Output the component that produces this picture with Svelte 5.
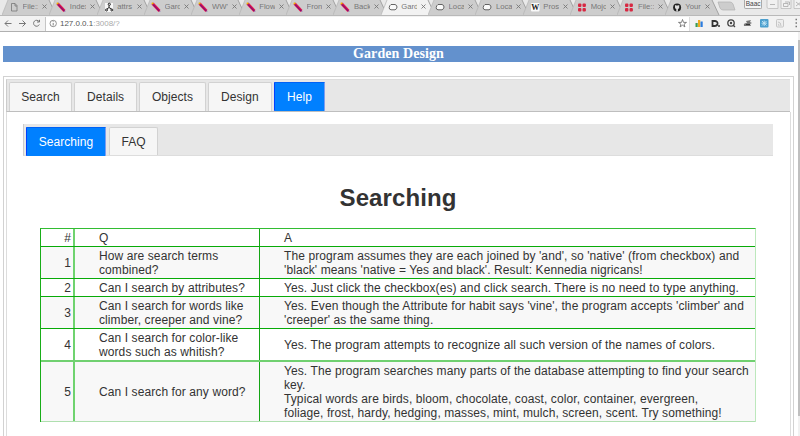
<script>
  const browserTabs = [
    { icon: 'file', title: 'File:::' },
    { icon: 'feather', title: 'Index' },
    { icon: 'graph', title: 'attrs' },
    { icon: 'feather', title: 'Gard' },
    { icon: 'feather', title: "WW'" },
    { icon: 'feather', title: 'Flow' },
    { icon: 'feather', title: 'Fron' },
    { icon: 'feather', title: 'Back' },
    { icon: 'cloud', title: 'Gard', active: true },
    { icon: 'cloud', title: 'Loca' },
    { icon: 'cloud', title: 'Loca' },
    { icon: 'wiki', title: 'Prosl' },
    { icon: 'dots', title: 'Mojo' },
    { icon: 'dots', title: 'File::' },
    { icon: 'github', title: 'Your' }
  ];
  const mainTabs = [
    { label: 'Search', width: 63 },
    { label: 'Details', width: 62.5 },
    { label: 'Objects', width: 66.5 },
    { label: 'Design', width: 63.5 },
    { label: 'Help', width: 51, active: true }
  ];
  const subTabs = [
    { label: 'Searching', width: 80, active: true },
    { label: 'FAQ', width: 49 }
  ];
  const rows = [
    { n: '#', q: ['Q'], a: ['A'], h: 18 },
    {
      n: '1',
      q: ['How are search terms', 'combined?'],
      a: [
        "The program assumes they are each joined by 'and', so 'native' (from checkbox) and",
        "'black' means 'native = Yes and black'. Result: Kennedia nigricans!"
      ],
      h: 32
    },
    {
      n: '2',
      q: ['Can I search by attributes?'],
      a: ['Yes. Just click the checkbox(es) and click search. There is no need to type anything.'],
      h: 18
    },
    {
      n: '3',
      q: ['Can I search for words like', 'climber, creeper and vine?'],
      a: [
        "Yes. Even though the Attribute for habit says 'vine', the program accepts 'climber' and",
        "'creeper' as the same thing."
      ],
      h: 32
    },
    {
      n: '4',
      q: ['Can I search for color-like', 'words such as whitish?'],
      a: ['Yes. The program attempts to recognize all such version of the names of colors.'],
      h: 33
    },
    {
      n: '5',
      q: ['Can I search for any word?'],
      a: [
        'Yes. The program searches many parts of the database attempting to find your search',
        'key.',
        'Typical words are birds, bloom, chocolate, coast, color, container, evergreen,',
        'foliage, frost, hardy, hedging, masses, mint, mulch, screen, scent. Try something!'
      ],
      h: 60
    }
  ];
</script>

<div class="browser">
  <div class="strip">
    {#each browserTabs as tab}
      <div class="btab">
        <svg class="shape" width="56" height="15" viewBox="0 0 56 15">
          <path d="M0 15 L6 0 H47 L54 15Z" fill={tab.active ? '#f2f2f2' : '#cdcdcd'} />
          <path d="M47 0 L54 15" stroke="#a2a2a2" stroke-width="1" fill="none" />
          <path d="M0 15 L6 0" stroke="#b4b4b4" stroke-width=".7" fill="none" />
        </svg>
        <svg class="fav" width="10" height="10" viewBox="0 0 10 10">
          {#if tab.icon === 'file'}
            <path d="M2.5 1.5H6L8 3.5V9H2.5ZM6 1.5V4H8" fill="none" stroke="#777" stroke-width=".8" />
          {:else if tab.icon === 'feather'}
            <path d="M1.5 1.5L8.5 9" stroke="#e5124b" stroke-width="2.8" />
            <path d="M1.5 2L8.8 9.5" stroke="#3a1296" stroke-width=".9" />
            <path d="M.8 .8L2.3 2.1" stroke="#f3b400" stroke-width="1.4" />
          {:else if tab.icon === 'graph'}
            <rect x="1" y="1" width="8" height="9" fill="#f7f7f7" />
            <g fill="none" stroke="#222" stroke-width="1">
              <circle cx="5.3" cy="2.3" r="1.1" /><circle cx="2.5" cy="8" r="1" /><circle cx="7.8" cy="8" r="1" />
              <path d="M5 3.5V5.5L3 7M5 5.5L7.5 7" />
            </g>
          {:else if tab.icon === 'cloud'}
            <path d="M3 2.5H7Q9 3 9 5T7 7.8H3Q1 7.5 1.2 5.5T3 2.5Z" fill="#fafafa" stroke="#555" stroke-width=".9" />
          {:else if tab.icon === 'wiki'}
            <rect x="1" y="1" width="8.5" height="8.5" rx="1" fill="#fafafa" />
            <text x="5.2" y="8" text-anchor="middle" class="w">W</text>
          {:else if tab.icon === 'dots'}
            <g fill="#d72842">
              <rect x="1" y="1.5" width="3.4" height="3.4" rx="1" /><rect x="5.5" y="1.5" width="3.4" height="3.4" rx="1" />
              <rect x="1" y="6" width="3.4" height="3.4" rx="1" /><rect x="5.5" y="6" width="3.4" height="3.4" rx="1" />
            </g>
          {:else}
            <circle cx="5.1" cy="5.5" r="4" fill="#222" />
            <path d="M3 3L4 3.4H6L7.2 3V6Q6.5 7 5.9 7V9.4H4.3V7Q3 6.8 3 5.5Z" fill="#ddd" />
          {/if}
        </svg>
        <span class="title">{tab.title}</span>
        <svg class="close" width="5" height="5" viewBox="0 0 5 5"><path d="M.5 .5L4.5 4.5M4.5 .5L.5 4.5" stroke="#777" stroke-width=".9" /></svg>
      </div>
    {/each}
    <svg class="newtab" width="20" height="12" viewBox="0 0 20 12"><path d="M1 2H13Q15 2 16 4L18 10H6Q4 10 3 8Z" fill="#cdcdcd" stroke="#b1b1b1" stroke-width=".7" /></svg>
    <div class="win">
      <span class="user">Ваас</span>
      <svg width="56" height="10" viewBox="0 0 56 10">
        <g fill="#f1f1f1" stroke="#bbb" stroke-width=".8">
          <path d="M1 0V7Q1 8.5 2.5 8.5H12V0M15 0V8.5H25V0M28 0V8.5H40V0" />
        </g>
        <path d="M4 4.5H9M17.5 3.5H22V6.5H17.5ZM19 2H23.5V5M30 2L35 6M35 2L30 6" fill="none" stroke="#aaa" stroke-width=".8" />
      </svg>
    </div>
  </div>
  <div class="toolbar">
    <svg width="45" height="16" viewBox="0 0 45 16" fill="none" stroke="#777" stroke-width="1">
      <path d="M11.5 7.5H5M8 4.5L5 7.5L8 10.5M19 7.5H25.5M22.5 4.5L25.5 7.5L22.5 10.5M39 5.5A3 3 0 1 0 39.3 8.5M39.5 3.8V6H37" />
    </svg>
    <div class="url">
      <svg width="14" height="14" viewBox="0 0 14 14"><circle cx="7.2" cy="6.5" r="3.2" fill="none" stroke="#777" stroke-width=".8" /><path d="M7.2 6V8.5M7.2 4.3V5.1" stroke="#777" stroke-width=".9" /></svg>
      <span class="addr">127.0.0.1<i>:3008/?</i></span>
      <svg class="star" width="12" height="14" viewBox="0 0 12 14"><path d="M5.5 2.5L6.5 5.4H9.5L7.1 7.1L7.9 9.9L5.5 8.2L3.1 9.9L3.9 7.1L1.5 5.4H4.5Z" fill="none" stroke="#666" stroke-width=".8" /></svg>
    </div>
    <svg width="110" height="16" viewBox="0 0 110 16">
      <rect x="5.5" y="7" width="2.2" height="4" fill="#3c9b52" /><rect x="8" y="4" width="2.2" height="7" fill="#f0aa1d" /><rect x="10.5" y="5.5" width="2.2" height="5.5" fill="#2b7de0" />
      <path d="M22.5 5H25Q28 5.5 27.5 8Q27 10 24.5 10H22.5Z" fill="none" stroke="#333" stroke-width="1.8" /><circle cx="29" cy="10" r="1" fill="#333" />
      <circle cx="41" cy="7" r="3.2" fill="none" stroke="#444" stroke-width="1.3" /><circle cx="41" cy="7" r="1.2" fill="#444" /><path d="M43 9L45 11" stroke="#444" stroke-width="1.3" />
      <path d="M54 10Q53 7 57 7L56 5L61 4L60 6L62 7L60 8L61 10Z" fill="#777" /><path d="M56 8.5H60" stroke="#333" />
      <rect x="70" y="3" width="8.5" height="8.5" rx="1" fill="#4b9fce" /><path d="M72 5L76.5 9.5M76.5 5L72 9.5M74.2 4.5V10M71.5 7.2H77" stroke="#c6e5f4" stroke-width=".9" />
      <rect x="86.5" y="3.5" width="7" height="7.5" rx="1" fill="#eee" stroke="#bbb" stroke-width=".8" /><path d="M88 6Q91 6 91 10M88 8Q89 8 89 10" fill="none" stroke="#bbb" stroke-width=".8" />
      <path d="M105.5 3.5H107M105.5 7H107M105.5 10.5H107" stroke="#777" stroke-width="1.5" />
    </svg>
  </div>
  <div class="viewport">
    <main>
      <h2>Garden Design</h2>
      <section class="outer">
        <nav class="bar">
          {#each mainTabs as t}<div class="tab" class:active={t.active} style="width:{t.width}px">{t.label}</div>{/each}
        </nav>
        <div class="panel">
          <nav class="bar sub">
            {#each subTabs as t}<div class="tab" class:active={t.active} style="width:{t.width}px">{t.label}</div>{/each}
          </nav>
          <h1>Searching</h1>
          <div class="table">
            {#each rows as r, i}
              <div class="row" class:shade={i % 2 === 1} class:last={i === 5} style="height:{r.h}px">
                <div class="n">{r.n}</div>
                <div class="q">{#each r.q as line}<div>{line}</div>{/each}</div>
                <div class="a">{#each r.a as line}<div>{line}</div>{/each}</div>
              </div>
            {/each}
          </div>
        </div>
      </section>
    </main>
    <div class="scroll"><div class="thumb"></div></div>
  </div>
</div>

<style>
  :global(body) { margin: 0; background: #fff; }
  * { box-sizing: border-box; }
  .browser { width: 800px; height: 436px; overflow: hidden; font-family: "Liberation Sans", Arial, sans-serif; color: #333; background: #fff; display: flex; flex-direction: column; }
  svg { display: block; flex: none; }
  .strip { height: 15px; flex: none; display: flex; background: #e9e9e9; overflow: hidden; }
  .btab { position: relative; flex: none; width: 47.35px; height: 15px; display: flex; align-items: center; padding-left: 9px; }
  .shape { position: absolute; left: 2px; top: 0; }
  .fav { position: relative; margin-top: -2px; }
  .title { position: relative; width: 17px; margin-left: 3.5px; margin-top: -2px; overflow: hidden; white-space: nowrap; font-size: 7.7px; line-height: 10px; color: #777; }
  .close { position: relative; margin-left: 4px; margin-top: -2px; }
  .w { font: bold 8px "Liberation Serif", serif; fill: #222; }
  .newtab { margin-left: 7px; }
  .win { display: flex; margin-left: 7px; }
  .user { width: 18px; height: 9px; border: 1px solid #aaa; border-top: 0; border-radius: 0 0 2px 2px; background: #f5f5f5; font-size: 6.5px; line-height: 8px; text-align: center; margin-right: 4px; color: #444; }
  .toolbar { height: 17px; flex: none; display: flex; align-items: center; background: #f2f2f2; border-top: 1px solid #b9b9b9; border-bottom: 1px solid #b0b0b0; }
  .url { width: 645px; height: 14px; background: #fff; border-left: 1px solid #c6c6c6; border-right: 1px solid #ddd; display: flex; align-items: center; }
  .addr { font-size: 8px; line-height: 13px; color: #555; letter-spacing: -.02px; }
  .addr i { font-style: normal; color: #aaa; }
  .star { margin-left: auto; }
  .viewport { flex: 1; min-height: 0; display: flex; }
  main { width: 798px; padding: 14px 4px 0 3px; overflow: hidden; }
  h2 { margin: 0; height: 16px; width: 791px; background: #6391cd; color: #fff; font: bold 14px/16px "Liberation Serif", serif; letter-spacing: .08px; text-align: center; }
  .outer { width: 791px; height: 500px; margin-top: 14px; border: 1px solid #d2d2d2; padding: 2px; }
  .bar { height: 33px; background: #e7e7e7; border-left: 1px solid #ccc; border-top: 1px solid #ddd; border-bottom: 1px solid #bebebe; display: flex; gap: 2.4px; padding: 2px 0 0 2px; font-size: 12px; width: 784px; }
  .tab { height: 29px; line-height: 28px; text-align: center; background: #f6f6f6; border: 1px solid #d2d2d2; border-bottom: 0; border-radius: 2px 2px 0 0; letter-spacing: .06px; }
  .tab.active { background: #0080ff; color: #fff; border-color: #0062f5 #7c9cf0 #0080ff #0040ff; border-radius: 1px; }
  .panel { width: 785px; height: 470px; border-left: 1px solid #ddd; border-right: 1px solid #ddd; padding: 12px 0 0 16px; }
  .sub { width: 750px; height: 32px; gap: 3px; padding-top: 3px; border-top: 0; border-bottom-color: #ddd; }
  .sub .tab { height: 28px; }
  .sub .tab.active { height: 29px; }
  h1 { width: 750px; height: 28px; margin: 28px 0 0; text-align: center; font-size: 24px; line-height: 28px; letter-spacing: .08px; }
  .table { width: 716px; margin: 16px 0 0 17px; border-top: 1px solid #32bd32; border-left: 1px solid #18ad18; border-right: 1px solid #bce8bc; font-size: 12px; line-height: 14px; letter-spacing: .095px; }
  .row { display: flex; border-bottom: 1px solid #08ab08; white-space: nowrap; }
  .row > div { display: flex; flex-direction: column; justify-content: center; }
  .shade { background: #f8f8f8; }
  .row:nth-child(5) { border-bottom: 2px solid #70d070; }
  .row.last { border-bottom-color: #afdfaf; }
  .n { width: 34px; text-align: right; padding-right: 2px; border-right: 2px solid #6fd36f; }
  .row .q { width: 185px; padding-left: 24px; border-right: 1px solid #14a514; }
  .a { padding-left: 24px; }
  .scroll { width: 2px; padding-top: 8px; background: #f1f1f1; }
  .thumb { height: 376px; background: #bfbfbf; }
</style>
